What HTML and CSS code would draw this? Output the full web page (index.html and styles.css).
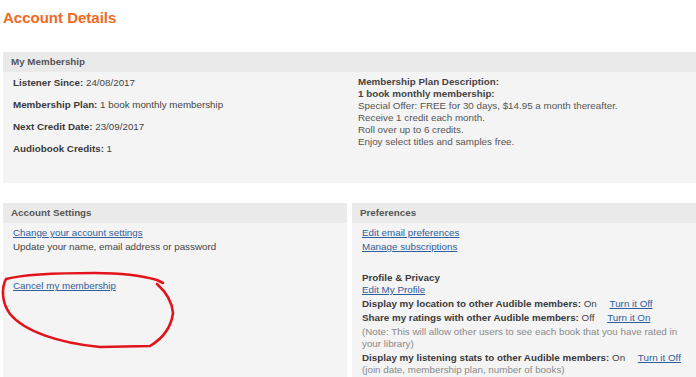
FILE: index.html
```html
<!DOCTYPE html>
<html lang="en">
<head>
  <meta charset="UTF-8" />
  <title>Account Details</title>
  <meta name="viewport" content="width=device-width, initial-scale=1" />
  <link rel="stylesheet" href="styles.css">
</head>
<body>

<div class="page">
  <h1>Account Details</h1>

  <!-- My Membership -->
  <div class="panel membership">
    <div class="panel-head">My Membership</div>
    <div class="panel-body grid">
      <div class="facts">
        <div class="fact"><strong>Listener Since:</strong> 24/08/2017</div>
        <div class="fact"><strong>Membership Plan:</strong> 1 book monthly membership</div>
        <div class="fact"><strong>Next Credit Date:</strong> 23/09/2017</div>
        <div class="fact"><strong>Audiobook Credits:</strong> 1</div>
      </div>
      <div class="plan">
        <strong>Membership Plan Description:</strong><br>
        <strong>1 book monthly membership:</strong><br>
        Special Offer: FREE for 30 days, $14.95 a month thereafter.<br>
        Receive 1 credit each month.<br>
        Roll over up to 6 credits.<br>
        Enjoy select titles and samples free.
      </div>
    </div>
  </div>

  <div class="columns">
    <!-- Account Settings -->
    <div class="panel settings">
      <div class="panel-head">Account Settings</div>
      <div class="panel-body">
        <div class="line"><a href="#">Change your account settings</a></div>
        <div class="line">Update your name, email address or password</div>
        <div class="line cancel"><a href="#">Cancel my membership</a></div>
      </div>
    </div>

    <!-- Preferences -->
    <div class="panel prefs">
      <div class="panel-head">Preferences</div>
      <div class="panel-body">
        <div class="line"><a href="#">Edit email preferences</a></div>
        <div class="line"><a href="#">Manage subscriptions</a></div>

        <div class="line privacy">
          <strong>Profile &amp; Privacy</strong><br>
          <a href="#">Edit My Profile</a>
        </div>
        <div class="line"><strong>Display my location to other Audible members:</strong> On <a class="toggle" href="#">Turn it Off</a></div>
        <div class="line"><strong>Share my ratings with other Audible members:</strong> Off <a class="toggle" href="#">Turn it On</a></div>
        <div class="line note">(Note: This will allow other users to see each book that you have rated in your library)</div>
        <div class="line">
          <strong>Display my listening stats to other Audible members:</strong> On <a class="toggle" href="#">Turn it Off</a><br>
          <span class="note">(join date, membership plan, number of books)</span>
        </div>
      </div>
    </div>
  </div>

  <!-- hand-drawn marker around the cancel link -->
  <svg class="scribble" width="696" height="377" viewBox="0 0 696 377">
    <path d="M163 274 L157 271 C140 266 120 264 95 264 C60 264 25 265 6 270
             C1 280 2 294 10 305 C24 322 58 334 100 338 L150 337
             C160 331 171 320 173 304 C172 292 166 283 157 275"
          fill="none" stroke="#e2141b" stroke-width="2.6" stroke-linecap="round" stroke-linejoin="round"/>
  </svg>
</div>

</body>
</html>
```

FILE: styles.css
```css
* {
  box-sizing: border-box;
}
body {
  margin: 0;
  background: #fff;
  font-family: Arial, 'Liberation Sans', sans-serif;
  font-size: 9.8px;
  color: #444;
  overflow: hidden;
}
.page {
  position: relative;
  width: 700px;
  padding-left: 3px;
}
h1 {
  margin: 9px 0 25px;
  font-size: 15px;
  line-height: 18px;
  color: #ef6a22;
}
a {
  color: #2f5d9c;
}
strong {
  color: #3a3a3a;
}
.panel {
  background: #f4f4f4;
}
.panel-head {
  height: 20px;
  line-height: 20px;
  padding-left: 8px;
  background: #ebeaea;
  color: #555;
  font-weight: bold;
}
.panel-body {
  padding: 4px 10px 0;
}
.grid {
  display: grid;
  grid-template-columns: 345px 1fr;
  height: 111px;
  padding: 0;
}
.facts {
  padding: 4px 0 0 10px;
}
.fact {
  line-height: 14px;
  margin-bottom: 8px;
}
.plan {
  padding: 4px 0 0 10px;
  line-height: 12px;
  color: #555;
}
.plan strong {
  color: #444;
}
.columns {
  display: grid;
  grid-template-columns: 344px 1fr;
  gap: 5px;
  margin-top: 20px;
}
.settings .panel-body {
  height: 134px;
}
.prefs .panel-body {
  height: 160px;
}
.line {
  line-height: 12px;
  margin-bottom: 2px;
}
.cancel {
  margin-top: 27px;
}
.privacy {
  margin-top: 19px;
}
.toggle {
  margin-left: 10px;
}
.note {
  color: #8a8a8a;
}
.scribble {
  position: absolute;
  top: 0;
  left: 0;
  pointer-events: none;
}
```
